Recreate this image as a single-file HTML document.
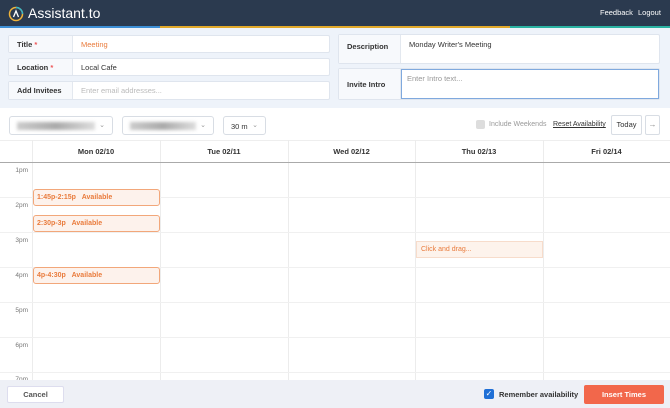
<!DOCTYPE html>
<html><head><style>
*{box-sizing:border-box;margin:0;padding:0}
body{width:670px;height:408px;overflow:hidden;font-family:"Liberation Sans",sans-serif;background:#fff;position:relative;font-size:8px;color:#333}
.a{position:absolute}
.hdr{left:0;top:0;width:670px;height:27px;background:#2b3a4f}
.bar{top:26px;height:2px}
.form{left:0;top:28px;width:670px;height:80px;background:#eef3fa}
.box{background:#fff;border:1px solid #dfe5ee;border-radius:2px}
.lbl{background:#f7f9fc;border-right:1px solid #e3e8ef;font-weight:bold;font-size:7.5px;color:#333;padding-left:8px;display:flex;align-items:center}
.val{font-size:7.5px;padding-left:8px;display:flex;align-items:center}
.sel{border:1px solid #d8dde4;border-radius:3px;background:#fff;height:19px;top:116px}
.blur{background:linear-gradient(90deg,#ccc,#aaa,#ddd);filter:blur(1.5px);height:8px;top:5px;left:7px;position:absolute}
.chev{position:absolute;right:7px;top:4px;color:#999;font-size:7px}
.col{top:140px;height:241px;border-left:1px solid #ececec}
.dh{top:140px;height:22px;font-weight:bold;font-size:7.5px;display:flex;align-items:center;justify-content:center}
.hl{left:0;width:670px;height:1px;background:#f0f0f0}
.tl{left:0;width:28px;text-align:right;font-size:6.5px;color:#777}
.ev{left:33px;width:127px;border:1.5px solid #f2a77a;border-radius:3px;background:#fdf2ec;color:#e97b3c;font-size:7px;font-weight:bold;padding-left:3px;display:flex;align-items:center}
</style></head><body>
<div class="a hdr"></div>
<div class="a bar" style="left:0;width:160px;background:#3d8fd6"></div>
<div class="a bar" style="left:160px;width:350px;background:#e2a92a"></div>
<div class="a bar" style="left:510px;width:160px;background:#2bb3a3"></div>
<svg class="a" style="left:8px;top:6px" width="16" height="16" viewBox="0 0 16 16"><circle cx="8" cy="8" r="6.5" fill="none" stroke="#f0b33a" stroke-width="1.5"/><path d="M8 1.5 A6.5 6.5 0 0 1 14.5 8" fill="none" stroke="#36b6c9" stroke-width="1.5"/><path d="M5.5 11 L8 5 L10.5 11" fill="none" stroke="#fff" stroke-width="1.3"/></svg>
<div class="a" style="left:28px;top:5px;color:#fff;font-size:14px">Assistant.to</div>
<div class="a" style="left:600px;top:8px;color:#fff;font-size:7.5px">Feedback</div>
<div class="a" style="left:638px;top:8px;color:#fff;font-size:7.5px">Logout</div>
<div class="a form"></div>
<div class="a box" style="left:8px;top:35px;width:322px;height:18px;display:flex"><div class="lbl" style="width:64px">Title <span style="color:#e55">&nbsp;*</span></div><div class="val" style="color:#e97b3c">Meeting</div></div>
<div class="a box" style="left:8px;top:58px;width:322px;height:18px;display:flex"><div class="lbl" style="width:64px">Location <span style="color:#e55">&nbsp;*</span></div><div class="val">Local Cafe</div></div>
<div class="a box" style="left:8px;top:81px;width:322px;height:19px;display:flex"><div class="lbl" style="width:64px">Add Invitees</div><div class="val" style="color:#bbb">Enter email addresses...</div></div>
<div class="a box" style="left:338px;top:34px;width:322px;height:30px;display:flex"><div class="lbl" style="width:62px;align-items:flex-start;padding-top:7px">Description</div><div class="val" style="align-items:flex-start;padding-top:5px">Monday Writer's Meeting</div></div>
<div class="a box" style="left:338px;top:68px;width:322px;height:32px;display:flex"><div class="lbl" style="width:62px">Invite Intro</div><div class="val" style="flex:1;border:1.5px solid #7fa9de;align-items:flex-start;padding-top:4px;color:#999;padding-left:5px">Enter Intro text...</div></div>
<div class="a sel" style="left:9px;width:104px"><div class="blur" style="width:78px"></div><span class="chev">⌄</span></div>
<div class="a sel" style="left:122px;width:92px"><div class="blur" style="width:66px"></div><span class="chev">⌄</span></div>
<div class="a sel" style="left:223px;width:43px;font-size:7.5px;padding:5px 0 0 7px">30 m<span class="chev">⌄</span></div>
<div class="a" style="left:476px;top:120px;width:9px;height:9px;background:#ddd;border-radius:2px"></div>
<div class="a" style="left:489px;top:121px;font-size:7px;color:#999">Include Weekends</div>
<div class="a" style="left:553px;top:121px;font-size:7px;color:#333;text-decoration:underline">Reset Availability</div>
<div class="a" style="left:611px;top:115px;width:31px;height:20px;border:1px solid #d8dde4;border-radius:2px;font-size:7.5px;text-align:center;line-height:18px">Today</div>
<div class="a" style="left:645px;top:115px;width:15px;height:20px;border:1px solid #d8dde4;border-radius:2px;font-size:8px;text-align:center;line-height:18px;color:#888">→</div>
<div class="a" style="left:0;top:140px;width:670px;height:1px;background:#eee"></div>
<div class="a col" style="left:32px"></div><div class="a col" style="left:160px"></div><div class="a col" style="left:288px"></div><div class="a col" style="left:415px"></div><div class="a col" style="left:543px"></div>
<div class="a dh" style="left:32px;width:128px">Mon 02/10</div>
<div class="a dh" style="left:160px;width:128px">Tue 02/11</div>
<div class="a dh" style="left:288px;width:127px">Wed 02/12</div>
<div class="a dh" style="left:415px;width:128px">Thu 02/13</div>
<div class="a dh" style="left:543px;width:127px">Fri 02/14</div>
<div class="a" style="left:0;top:162px;width:670px;height:1px;background:#aaa"></div>
<div class="a hl" style="top:197px"></div><div class="a hl" style="top:232px"></div><div class="a hl" style="top:267px"></div><div class="a hl" style="top:302px"></div><div class="a hl" style="top:337px"></div><div class="a hl" style="top:372px"></div>
<div class="a tl" style="top:167px">1pm</div><div class="a tl" style="top:202px">2pm</div><div class="a tl" style="top:237px">3pm</div><div class="a tl" style="top:272px">4pm</div><div class="a tl" style="top:307px">5pm</div><div class="a tl" style="top:342px">6pm</div><div class="a tl" style="top:376px">7pm</div>
<div class="a ev" style="top:189px;height:17px">1:45p-2:15p&nbsp;&nbsp;&nbsp;Available</div>
<div class="a ev" style="top:215px;height:17px">2:30p-3p&nbsp;&nbsp;&nbsp;Available</div>
<div class="a ev" style="top:267px;height:17px">4p-4:30p&nbsp;&nbsp;&nbsp;Available</div>
<div class="a" style="left:416px;top:241px;width:127px;height:17px;background:#fdf3ec;border:1px solid #f7dccb;color:#e97b3c;font-size:7px;padding:4px 0 0 4px">Click and drag...</div>
<div class="a" style="left:0;top:380px;width:670px;height:28px;background:#eef0f6"></div>
<div class="a" style="left:7px;top:386px;width:57px;height:17px;background:#fff;border:1px solid #dde;border-radius:2px;font-size:7.5px;font-weight:bold;text-align:center;line-height:15px;color:#555">Cancel</div>
<div class="a" style="left:484px;top:389px;width:10px;height:10px;background:#1f6fd6;border-radius:2px;color:#fff;font-size:8px;line-height:10px;text-align:center">✓</div>
<div class="a" style="left:499px;top:390px;font-size:7.5px;font-weight:bold;color:#333">Remember availability</div>
<div class="a" style="left:584px;top:385px;width:80px;height:19px;background:#f2674b;border-radius:2px;color:#fff;font-size:7.5px;font-weight:bold;text-align:center;line-height:19px">Insert Times</div>
</body></html>
